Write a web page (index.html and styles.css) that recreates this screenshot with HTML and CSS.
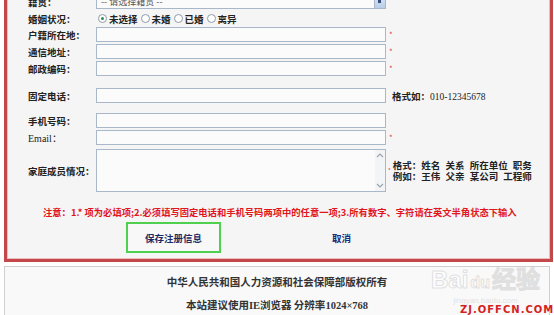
FILE: index.html
```html
<!DOCTYPE html>
<html lang="zh-CN">
<head>
    <meta charset="UTF-8">
    <title>注册信息</title>
    <link rel="stylesheet" href="styles.css">
</head>
<body>
    <div class="page">
        <div class="reg-box">
            <div class="row">
                <label>籍贯：</label>
                <div class="select"><span>-- 请选择籍贯 --</span><i class="select-btn"></i></div>
            </div>
            <div class="row">
                <label>婚姻状况：</label>
                <div class="radios">
                    <span class="radio checked"></span>未选择
                    <span class="radio"></span>未婚
                    <span class="radio"></span>已婚
                    <span class="radio"></span>离异
                </div>
            </div>
            <div class="row row-tight">
                <label>户籍所在地：</label>
                <input type="text">
                <span class="star">*</span>
            </div>
            <div class="row">
                <label>通信地址：</label>
                <input type="text">
                <span class="star">*</span>
            </div>
            <div class="row">
                <label>邮政编码：</label>
                <input type="text">
                <span class="star">*</span>
            </div>
            <div class="row row-phone">
                <label>固定电话：</label>
                <input type="text">
                <span class="hint">格式如：<span class="num">010-12345678</span></span>
            </div>
            <div class="row row-mobile">
                <label>手机号码：</label>
                <input type="text">
            </div>
            <div class="row">
                <label class="latin">Email：</label>
                <input type="text">
                <span class="star">*</span>
            </div>
            <div class="row row-family">
                <label>家庭成员情况：</label>
                <div class="textarea">
                    <div class="scroll">
                        <svg width="8" height="6" viewBox="0 0 8 6"><path d="M1 5 L4 2 L7 5" fill="none" stroke="#9aa4ae" stroke-width="1.2"/></svg>
                        <svg width="8" height="6" viewBox="0 0 8 6"><path d="M1 1 L4 4 L7 1" fill="none" stroke="#9aa4ae" stroke-width="1.2"/></svg>
                    </div>
                </div>
                <div class="family-hint">
                    <span class="star small">*</span>
                    <div class="hint">格式：姓名 关系 所在单位 职务<br>例如：王伟 父亲 某公司 工程师</div>
                </div>
            </div>
            <p class="note">注意：1.* 项为必填项;2.必须填写固定电话和手机号码两项中的任意一项;3.所有数字、字符请在英文半角状态下输入</p>
            <div class="actions">
                <div class="btn-save">保存注册信息</div>
                <a class="btn-cancel">取消</a>
            </div>
        </div>

        <div class="footer">
            <p>中华人民共和国人力资源和社会保障部版权所有</p>
            <p>本站建议使用<span class="latin">IE</span>浏览器 分辨率<span class="latin">1024×768</span></p>

            <div class="watermark">
                <div class="wm-logo">Bai<span class="paw">du</span>经验</div>
                <div class="wm-url">jingyan.baidu.com</div>
            </div>
            <div class="offcn">ZJ.OFFCN.COM</div>
        </div>
    </div>
</body>
</html>
```

FILE: styles.css
```css
body {
    margin: 0;
    background-color: #ffffff;
    font-family: "Noto Sans CJK SC", sans-serif;
    font-size: 9.5px;
    color: #222;
    overflow: hidden;
}

.page {
    display: flow-root;
    padding: 0 1px 0 4px;
}

.reg-box {
    margin-top: -14px;
    padding: 3px 0 6px 21px;
    border: 3px solid #c4474a;
    box-shadow: inset 0 0 0 1px #ebbcbc;
    background-color: #f5f5f5;
}

.row {
    display: grid;
    grid-template-columns: 68px 290px auto;
    align-items: center;
    height: 15px;
    margin-top: 2px;
}

.row label {
    font-weight: bold;
    white-space: nowrap;
}

.row label.latin {
    font-family: "Liberation Serif", serif;
    font-size: 10px;
    font-weight: normal;
}

.row-tight {
    margin-top: 1px;
}

.row-phone {
    margin-top: 12px;
}

.row-mobile {
    margin-top: 10px;
}

.row-family {
    height: 43px;
    margin-top: 4px;
}

.row input {
    height: 15px;
    width: 290px;
    box-sizing: border-box;
    margin: 0;
    padding: 0;
    border: 1px solid #a9b8c9;
    background-color: #fbfbfc;
}

.select {
    height: 15px;
    box-sizing: border-box;
    border: 1px solid #a9b8c9;
    background-color: #fbfbfc;
    display: flex;
    align-items: center;
    justify-content: space-between;
    padding-left: 4px;
    color: #555;
    font-size: 9px;
}

.select-btn {
    width: 10px;
    height: 13px;
    background: linear-gradient(#dde8f6, #b9cde8);
    border-left: 1px solid #a9b8c9;
    position: relative;
}

.select-btn::after {
    content: "";
    position: absolute;
    left: 3px;
    top: 5px;
    width: 3px;
    height: 3px;
    background-color: #3a4f78;
}

.star {
    color: #e04646;
    font-size: 8px;
    padding-left: 3px;
}

.hint {
    margin-left: 6px;
    font-weight: bold;
    white-space: nowrap;
}

.num {
    font-family: "Liberation Serif", serif;
    font-weight: normal;
    font-size: 9.5px;
}

.radios {
    display: flex;
    align-items: center;
    padding-left: 2px;
    font-weight: bold;
}

.radio {
    width: 7px;
    height: 7px;
    border: 1px solid #8d9ba8;
    border-radius: 50%;
    background-color: #fff;
    margin: 0 2px 0 3px;
    position: relative;
}

.radio:first-child {
    margin-left: 0;
}

.radio.checked::after {
    content: "";
    position: absolute;
    left: 2px;
    top: 2px;
    width: 3px;
    height: 3px;
    border-radius: 50%;
    background-color: #2e8c55;
}

.textarea {
    height: 43px;
    box-sizing: border-box;
    border: 1px solid #a9b8c9;
    background-color: #fbfbfc;
    display: flex;
    justify-content: flex-end;
}

.scroll {
    width: 10px;
    display: flex;
    flex-direction: column;
    justify-content: space-between;
    align-items: center;
    padding: 2px 0;
    background-color: #f3f4f6;
}

.family-hint {
    display: flex;
    align-items: center;
}

.family-hint .hint {
    margin-left: 2px;
    line-height: 11px;
    word-spacing: 3px;
}

.star.small {
    font-size: 6px;
    padding-left: 2px;
}

.note {
    margin: 14px 0 0 15px;
    line-height: 12px;
    font-size: 9.3px;
    color: #e2141c;
    font-weight: bold;
    white-space: nowrap;
}

.actions {
    display: flex;
    align-items: center;
    margin: 4px 0 0 98px;
}

.btn-save {
    width: 95px;
    height: 31px;
    box-sizing: border-box;
    border: 2px solid #4fd04f;
    background-color: #f8f8f8;
    display: flex;
    align-items: center;
    justify-content: center;
    font-weight: bold;
    color: #1c2a66;
}

.btn-cancel {
    margin-left: 111px;
    font-weight: bold;
    color: #1c2a7a;
}

.footer {
    position: relative;
    margin: 4px 3px 0 0;
    height: 60px;
    border: 1px solid #cfcfcf;
    background-color: #f9f9f9;
    text-align: center;
    font-size: 10.5px;
    font-weight: bold;
    color: #333;
}

.footer p {
    margin: 8px 0 0;
    line-height: 14px;
}

.footer p + p {
    margin-top: 9px;
}

.footer .latin {
    font-family: "Liberation Serif", serif;
}

.watermark {
    position: absolute;
    left: 426px;
    top: 0;
    text-align: center;
    pointer-events: none;
}

.wm-logo {
    font-family: "Liberation Sans", sans-serif;
    font-size: 24px;
    font-weight: bold;
    line-height: 26px;
    color: rgba(255, 255, 255, 0.75);
    -webkit-text-stroke: 1px rgba(170, 170, 170, 0.35);
}

.paw {
    font-size: 16px;
    margin: 0 2px;
}

.wm-url {
    font-family: "Liberation Sans", sans-serif;
    font-size: 8px;
    font-weight: normal;
    color: rgba(200, 200, 200, 0.5);
}

.offcn {
    position: absolute;
    left: 455px;
    top: 37px;
    font-family: "DejaVu Sans", sans-serif;
    font-size: 10px;
    font-weight: bold;
    letter-spacing: 1px;
    line-height: 12px;
    color: #d41f24;
}
```
